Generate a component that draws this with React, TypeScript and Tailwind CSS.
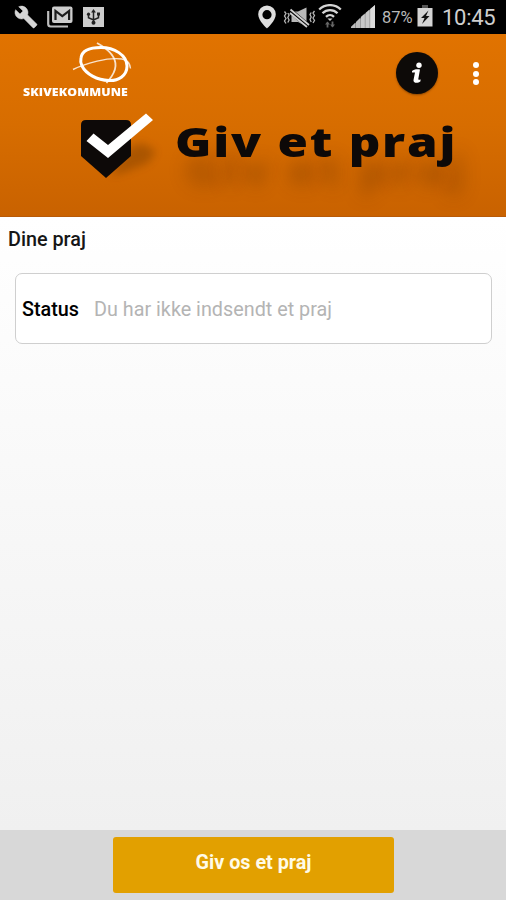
function WrenchIcon() {
  return (
    <svg width="24" height="24" viewBox="0 0 24 24" fill="#d6d6d6" stroke="#d6d6d6" strokeWidth=".5">
      <path d="M22.7 19l-9.1-9.1c.9-2.3.4-5-1.5-6.9-2-2-5-2.4-7.4-1.3L9 6 6 9 1.6 4.7C.4 7.1.9 10.1 2.9 12.1c1.900 1.900 4.600 2.400 6.900 1.500l9.100 9.100c.4.4 1 .4 1.400 0l2.300-2.300c.5-.4.5-1.100.1-1.400z" />
    </svg>
  );
}

function MailIcon() {
  return (
    <svg width="26" height="22" viewBox="0 0 26 22" fill="none">
      <path d="M1.200 5v13a2.500 2.500 0 0 0 2.500 2.500H21" stroke="#bdbdbd" strokeWidth="2.200" />
      <rect x="5" y="0.500" width="20.500" height="16.500" rx="2" fill="#cdcdcd" />
      <path d="M8.500 14V5l6.800 5.200 6.800-5.200v9" stroke="#1c1c1c" strokeWidth="2.200" />
    </svg>
  );
}

function UsbIcon() {
  return (
    <svg width="21" height="20" viewBox="0 0 21 20" fill="none">
      <rect width="21" height="20" fill="#cdcdcd" />
      <path d="M10.500 4v11M5.500 7.500v3.200l5 2.300 5-2.300V7" stroke="#222" strokeWidth="1.500" />
      <path d="M10.500 2l2.400 3.500H8.100z" fill="#222" />
      <circle cx="5.500" cy="7.200" r="1.600" fill="#222" />
      <path d="M14 5.500h3v3h-3z" fill="#222" />
      <circle cx="10.500" cy="15.800" r="2" fill="#222" />
    </svg>
  );
}

function PinIcon() {
  return (
    <svg width="18" height="24" viewBox="0 -2 18 24" fill="#dedede">
      <path fillRule="evenodd" d="M9-1.500A8.800 8.800 0 0 0 .2 7.300C.2 14 9 21.500 9 21.500S17.800 14 17.800 7.300A8.800 8.800 0 0 0 9-1.500zm0 4.600a4.600 4.600 0 1 1 0 9.200 4.600 4.600 0 0 1 0-9.200z" />
    </svg>
  );
}

function MuteIcon() {
  return (
    <svg width="33" height="22" viewBox="0 0 33 22" fill="none">
      <path d="M1.500 4.500L3 6.500 1.500 9 3 11.500 1.500 14 3 16.500M4.800 6l1.300 2-1.300 2.500 1.300 2.500L4.800 15.500" stroke="#b8b8b8" strokeWidth="1.300" />
      <path d="M31.500 4L30 6l1.500 2.500L30 11l1.500 2.500-1.500 2.500M28.200 5.500L27 7.500l1.200 2.500L27 12.500l1.200 2.500" stroke="#b8b8b8" strokeWidth="1.300" />
      <path d="M8.500 4.500H15l8.500-4v19L15 15H8.500z" fill="#b8b8b8" />
      <path d="M7 3.500l18 15.500" stroke="#000" strokeWidth="5" />
      <path d="M7.500 2.500l18.500 15.500M7 6l17 14" stroke="#d0d0d0" strokeWidth="1.800" />
    </svg>
  );
}

function WifiIcon() {
  return (
    <svg width="24" height="25" viewBox="0 0 24 25" fill="none">
      <path d="M1.200 5.500a15.500 15.500 0 0 1 21.600 0M4.500 9.300a10.500 10.500 0 0 1 15 0M8 12.800a5.800 5.800 0 0 1 8 0" stroke="#d4d4d4" strokeWidth="2.300" />
      <path d="M9.500 14.500h5L12 17z" fill="#cfcfcf" />
      <path d="M9.500 23.500v-5M14.500 17.500v5" stroke="#666" strokeWidth="1.800" />
      <path d="M7 20.500l2.500-3 2.500 3zM12 20.500l2.500 3 2.500-3z" fill="#666" />
    </svg>
  );
}

function SignalIcon() {
  return (
    <svg width="24" height="23" viewBox="0 0 24 23">
      <path d="M0 23v-1L24 0v23z" fill="#8f8f8f" />
      <path d="M0 23v-1l4-4v5zM5 23v-6l4-4v10z" fill="#bbb" />
      <path d="M9.800 23V12l4-3.500V23zM14.500 23V8l4-3.500V23z" fill="#c8c8c8" />
      <path d="M19.200 23V4L24 0v23z" fill="#dcdcdc" />
    </svg>
  );
}

function BatteryIcon() {
  return (
    <svg width="16" height="22" viewBox="0 0 16 22">
      <path d="M5 0h6v3H5z" fill="#555" />
      <path d="M.5 3h15v18.500H.5z" fill="#d4d4d4" />
      <path d="M11.500 5.500L4 13h3.500L5 19l7.500-8H9z" fill="#111" />
    </svg>
  );
}

function StatusBar() {
  return (
    <div className="flex h-[34px] shrink-0 items-start bg-black font-[Roboto,sans-serif] text-[#cfcfcf]">
      <div className="ml-[14px] mt-[5px]"><WrenchIcon /></div>
      <div className="ml-[9px] mt-[6px]"><MailIcon /></div>
      <div className="ml-[10px] mt-[7px]"><UsbIcon /></div>
      <div className="ml-auto mt-[5px]"><PinIcon /></div>
      <div className="ml-[7px] mt-[7px]"><MuteIcon /></div>
      <div className="ml-[2px] mt-[4px]"><WifiIcon /></div>
      <div className="ml-[9px] mt-[5px]"><SignalIcon /></div>
      <div className="ml-[7px] mt-[8px] w-[35px] whitespace-nowrap text-[16.500px] leading-[20px] text-[#b8b8b8]">87%</div>
      <div className="mt-[5px]"><BatteryIcon /></div>
      <div className="ml-[9px] mr-[10px] mt-[6px] w-[54px] whitespace-nowrap text-[22px] leading-[24px] tracking-[-0.3px]">10:45</div>
    </div>
  );
}

function MunicipalityLogo() {
  return (
    <div className="w-[110px] text-white">
      <svg className="ml-[49px] block" width="62" height="44" viewBox="0 0 62 44" fill="none" stroke="#fff">
        <path d="M9 16C10 8 18 5.500 29 5.500 42 5.500 55 13 55 24 55 34 46 39 37 38.500 25 38 14 32 10 24 8.500 21 8.500 18 9 16z" strokeWidth="3" />
        <path d="M1 27.500C14 21 36 15 50 17c5 1 8 5 8.500 9.500" strokeWidth="1.400" opacity=".8" />
        <path d="M25 1c11 6 19 14 18.500 23-.5 8-5 12-9 17" strokeWidth="1.800" opacity=".8" />
      </svg>
      <div className="-mt-px origin-left scale-x-[1.12] whitespace-nowrap font-['Open_Sans',sans-serif] text-[11px] font-extrabold leading-[14px] tracking-[0.100px]">
        SKIVEKOMMUNE
      </div>
    </div>
  );
}

function CheckBadge() {
  return (
    <svg className="shrink-0 overflow-visible" width="76" height="68" viewBox="0 0 76 68">
      <defs>
        <filter id="soft" x="-50%" y="-50%" width="200%" height="200%">
          <feGaussianBlur stdDeviation="4.500" />
        </filter>
      </defs>
      <path d="M30 62L50 34l12-4 14 8-8 12-26 10z" fill="#7a3c00" opacity=".45" filter="url(#soft)" />
      <path d="M6 7h40q5 0 5 5v31L26 65 1 43V12q0-5 5-5z" fill="#0d0908" />
      <path d="M6.500 28L13.500 20.500 28 32 66 0.500 73 7 28 45z" fill="#fff" />
    </svg>
  );
}

function Header() {
  return (
    <header className="h-[183px] shrink-0 overflow-hidden border-b border-[#b85a08] bg-linear-to-b from-[#e17300] via-[#d76d00] to-[#c96200]">
      <div className="flex h-[79px] items-start pt-[8px]">
        <div className="ml-[23px]"><MunicipalityLogo /></div>
        <div className="ml-auto mt-[10px] flex h-[42px] w-[42px] items-center justify-center rounded-full bg-[#0d0a08] shadow-[0_1px_2px_rgba(60,30,0,0.5)]">
          <svg width="12" height="22" viewBox="0 0 12 22" fill="#fff">
            <circle cx="8" cy="3.300" r="2.700" />
            <path d="M1 9c2-1.500 4-2 8-1.500L7.300 17c-.1 1 .8 1 2.200.2v2C7 21.500 2 21.500 2.500 18L4 10.500H1z" />
          </svg>
        </div>
        <div className="ml-[35px] mr-[27px] mt-[20px] flex flex-col gap-[2.500px]">
          <span className="h-[6px] w-[6px] rounded-full bg-white" />
          <span className="h-[6px] w-[6px] rounded-full bg-white" />
          <span className="h-[6px] w-[6px] rounded-full bg-white" />
        </div>
      </div>
      <div className="flex items-start pl-[80px]">
        <CheckBadge />
        <h1 className="ml-[19px] mt-[2px] origin-left scale-x-[1.2] whitespace-nowrap font-['Open_Sans',sans-serif] text-[41px] font-extrabold leading-[52px] tracking-[1.500px] text-[#0d0908] [text-shadow:8px_28px_16px_rgba(110,50,0,0.38)]">
          Giv et praj
        </h1>
      </div>
    </header>
  );
}

export default function App() {
  return (
    <div className="flex h-[900px] w-[506px] flex-col overflow-hidden font-[Roboto,sans-serif]">
      <StatusBar />
      <Header />
      <main className="flex-1 bg-linear-to-b from-white to-[#f0f0f0]">
        <h2 className="ml-[8px] pt-[11px] text-[19.800px] font-medium leading-[24px] text-[#161616]">Dine praj</h2>
        <div className="ml-[15px] mr-[14px] mt-[21px] flex h-[71px] items-center rounded-[7px] border-[1.5px] border-[#cfcfcf] bg-white pl-[6px] pt-[3px] text-[19.800px]">
          <span className="w-[72px] font-medium text-black">Status</span>
          <span className="whitespace-nowrap text-[#b4b4b4]">Du har ikke indsendt et praj</span>
        </div>
      </main>
      <footer className="flex h-[70px] shrink-0 justify-center bg-[#d8d8d8] pt-[7px]">
        <button className="ml-px h-[56px] w-[281px] rounded-[3px] bg-[#e2a000] pb-[5px] text-[19.800px] font-bold text-[#fffbe8]">
          Giv os et praj
        </button>
      </footer>
    </div>
  );
}
